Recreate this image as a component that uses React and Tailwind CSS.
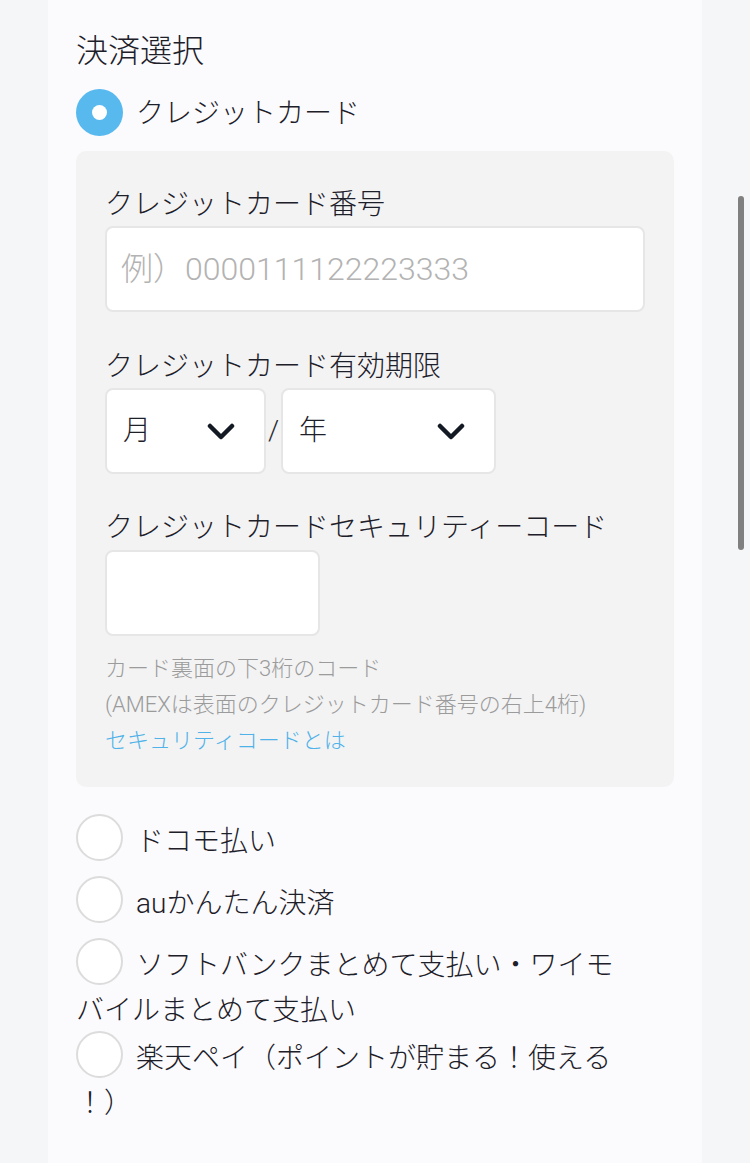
import React from "react";

const Radio = ({ checked }) =>
  checked ? (
    <span className="inline-block w-[47px] h-[47px] p-[16px] -my-[10px] mr-[13px] rounded-full bg-[#58b9ef] align-[-3px]">
      <span className="block w-[15px] h-[15px] rounded-full bg-white" />
    </span>
  ) : (
    <span className="inline-block w-[47px] h-[47px] -my-[10px] mr-[13px] rounded-full border-2 border-[#dcdcdc] bg-white align-[0.5px]" />
  );

const Chevron = () => (
  <svg width="28" height="17" viewBox="0 0 28 17" fill="none">
    <path
      d="M3 3l11 11 11-11"
      stroke="#141a24"
      strokeWidth="4.5"
      strokeLinecap="round"
      strokeLinejoin="round"
    />
  </svg>
);

const Select = ({ label, width }) => (
  <div
    className={`flex items-center justify-between h-[86px] pl-[16px] pr-[29px] bg-white border-2 border-[#e6e6e6] rounded-[8px] ${width}`}
  >
    <span className="text-[28px] leading-none">{label}</span>
    <Chevron />
  </div>
);

export default function App() {
  const options = [
    { label: "ドコモ払い", mb: "mb-[17px]" },
    { label: "auかんたん決済", mb: "mb-[17px]" },
    { label: "ソフトバンクまとめて支払い・ワイモバイルまとめて支払い", mb: "mb-[3px]" },
    { label: "楽天ペイ（ポイントが貯まる！使える！）", mb: "" },
  ];

  return (
    <div className="relative h-[1163px] overflow-hidden bg-[#f5f6f8] px-[48px] text-[#1d2029] font-light font-['Roboto','Noto_Sans_CJK_JP',sans-serif]">
      <div className="h-full bg-[#fbfbfd] px-[28px] pt-[29px]">
        {/* 決済選択 */}
        <h2 className="text-[32px] leading-[44px] mb-[18px]">決済選択</h2>

        <div className="text-[28px] leading-[45px] mb-[15px]">
          <Radio checked />
          クレジットカード
        </div>

        {/* credit card form */}
        <div className="bg-[#f3f3f4] rounded-[10px] px-[29px] pt-[34px] pb-[28px]">
          <div className="text-[28px] leading-[40px] mb-[1px]">クレジットカード番号</div>
          <div className="flex items-center h-[86px] px-[14px] bg-white border-2 border-[#e6e6e6] rounded-[8px] text-[32px] text-[#b3b3b3]">
            例）0000111122223333
          </div>

          <div className="text-[28px] leading-[40px] mt-[35px] mb-[1px]">クレジットカード有効期限</div>
          <div className="flex items-center">
            <Select label="月" width="w-[161px]" />
            <span className="w-[15px] text-center text-[28px] text-[#2a2d33]">/</span>
            <Select label="年" width="w-[215px]" />
          </div>

          <div className="text-[28px] leading-[40px] mt-[34px] mb-[2px]">
            クレジットカードセキュリティーコード
          </div>
          <div className="w-[215px] h-[86px] bg-white border-2 border-[#e6e6e6] rounded-[8px]" />

          <div className="mt-[15px] text-[22px] leading-[36px] text-[#9b9b9b]">
            <p>カード裏面の下3桁のコード</p>
            <p>(AMEXは表面のクレジットカード番号の右上4桁)</p>
            <p className="text-[#4fb2e8]">セキュリティコードとは</p>
          </div>
        </div>

        {/* other payment methods */}
        <div className="mt-[32px] w-[554px] text-[28px] leading-[45px] [line-break:anywhere]">
          {options.map((o) => (
            <div key={o.label} className={o.mb}>
              <Radio />
              {o.label}
            </div>
          ))}
        </div>
      </div>

      {/* overlay scrollbar */}
      <div className="absolute right-[6px] top-[196px] w-[6px] h-[354px] rounded-full bg-[#808080]" />
    </div>
  );
}
